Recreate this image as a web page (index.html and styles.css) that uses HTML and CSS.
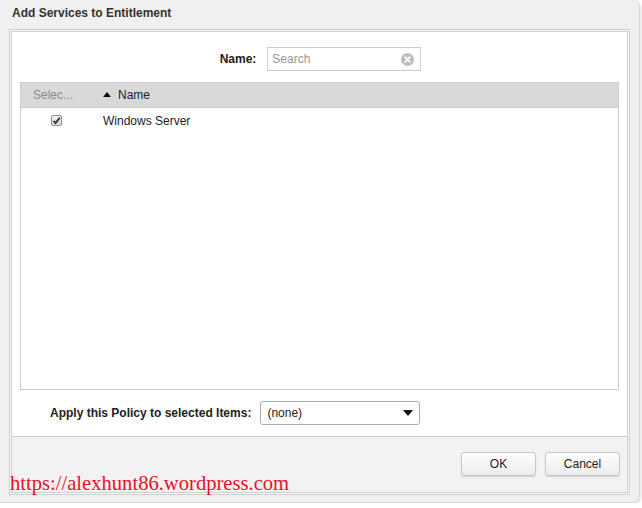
FILE: index.html
```html
<!DOCTYPE html>
<html lang="en">
<head>
    <meta charset="UTF-8">
    <title>Add Services to Entitlement</title>
    <link rel="stylesheet" href="styles.css">
</head>
<body>
    <div class="dlg">
        <div class="dlg__title">Add Services to Entitlement</div>
        <div class="dlg__frame">
            <div class="dlg__inner">
                <div class="dlg__content">
                    <div class="search-row">
                        <label class="lbl">Name:</label>
                        <div class="search">
                            <span class="search__ph">Search</span>
                            <svg class="search__clear" width="13" height="13" viewBox="0 0 13 13">
                                <circle cx="6.5" cy="6.5" r="6.5" fill="#bdbdbd"/>
                                <path d="M4.2 4.2 L8.8 8.8 M8.8 4.2 L4.2 8.8" stroke="#fff" stroke-width="1.8" stroke-linecap="round"/>
                            </svg>
                        </div>
                    </div>
                    <div class="grid">
                        <div class="grid__head">
                            <div class="grid__sel">Selec...</div>
                            <div class="grid__name">
                                <span class="sort-up"></span>Name
                            </div>
                        </div>
                        <div class="grid__row">
                            <div class="grid__sel">
                                <span class="chk">
                                    <svg width="9" height="9" viewBox="0 0 9 9">
                                        <path d="M1.5 4.8 L3.6 7 L7.8 1.6" stroke="#333" stroke-width="1.8" fill="none"/>
                                    </svg>
                                </span>
                            </div>
                            <div class="grid__name">Windows Server</div>
                        </div>
                    </div>
                    <div class="policy-row">
                        <label class="lbl">Apply this Policy to selected Items:</label>
                        <div class="select">
                            <span>(none)</span>
                            <span class="select__arrow"></span>
                        </div>
                    </div>
                </div>
                <div class="dlg__footer">
                    <button class="btn">OK</button>
                    <button class="btn">Cancel</button>
                </div>
            </div>
        </div>
        <div class="watermark">https://alexhunt86.wordpress.com</div>
    </div>
</body>
</html>
```

FILE: styles.css
```css
body{
    margin: 0;
    background: #fff;
    font-family: "Liberation Sans", Arial, sans-serif;
    font-size: 12px;
    color: #222;
}
.dlg{
    position: relative;
    width: 640px;
    height: 503px;
    box-sizing: border-box;
    background: #f0f0f0;
    border-right: 1px solid #d6d6d6;
    border-bottom: 1px solid #d6d6d6;
    border-radius: 0 7px 7px 0;
    box-shadow: 1px 1px 3px rgba(0, 0, 0, 0.12);
}
.dlg__title{
    height: 29px;
    line-height: 26px;
    padding-left: 12px;
    font-weight: bold;
    color: #333;
}
.dlg__frame{
    margin: 0 9px;
    border: 1px solid #cfcfcf;
    padding: 1px;
    background: #fafafa;
}
.dlg__inner{
    border: 1px solid #cfcfcf;
    background: #fff;
}
.dlg__content{
    padding: 15px 8px 11px 8px;
    border-bottom: 1px solid #d0d0d0;
}
.lbl{
    font-weight: bold;
    color: #222;
}
.search-row{
    display: flex;
    justify-content: center;
    align-items: center;
    gap: 11px;
    padding-left: 2px;
}
.search{
    width: 142px;
    height: 22px;
    border: 1px solid #ccc;
    display: flex;
    align-items: center;
    justify-content: space-between;
    padding: 0 6px 0 4px;
    box-sizing: content-box;
}
.search__ph{
    color: #999;
}
.grid{
    margin-top: 11px;
    height: 306px;
    border: 1px solid #ccc;
}
.grid__head{
    display: flex;
    height: 24px;
    align-items: center;
    background: #d9d9d9;
    border-bottom: 1px solid #cdcdcd;
}
.grid__row{
    display: flex;
    height: 26px;
    align-items: center;
}
.grid__sel{
    width: 82px;
    padding-left: 12px;
    box-sizing: border-box;
}
.grid__head .grid__sel{
    color: #8a8a8a;
}
.grid__row .grid__sel{
    padding-left: 30px;
}
.grid__name{
    display: flex;
    align-items: center;
}
.sort-up{
    width: 0;
    height: 0;
    border-left: 4px solid transparent;
    border-right: 4px solid transparent;
    border-bottom: 5px solid #111;
    margin-right: 7px;
    margin-top: -1px;
}
.chk{
    display: flex;
    align-items: center;
    justify-content: center;
    width: 9px;
    height: 9px;
    border: 1px solid #8e8e8e;
    border-radius: 2px;
    background: linear-gradient(#f4f4f4, #d8d8d8);
    margin-top: -2px;
}
.policy-row{
    display: flex;
    align-items: center;
    gap: 9px;
    margin-top: 11px;
    padding-left: 30px;
}
.select{
    width: 146px;
    height: 22px;
    border: 1px solid #aaa;
    border-radius: 3px;
    display: flex;
    align-items: center;
    justify-content: space-between;
    padding: 0 6px 0 6px;
    box-sizing: content-box;
    background: #fff;
}
.select__arrow{
    width: 0;
    height: 0;
    border-left: 5px solid transparent;
    border-right: 5px solid transparent;
    border-top: 6px solid #111;
}
.dlg__footer{
    height: 55px;
    background: #f2f2f2;
    display: flex;
    justify-content: flex-end;
    align-items: flex-start;
    gap: 9px;
    padding: 15px 7px 0 0;
    box-sizing: border-box;
}
.btn{
    width: 75px;
    height: 24px;
    font-family: "Liberation Sans", Arial, sans-serif;
    font-size: 12px;
    color: #222;
    border: 1px solid #c6c6c6;
    border-radius: 3px;
    background: linear-gradient(#fefefe, #ececec);
    box-shadow: 0 1px 1px rgba(0, 0, 0, 0.12);
}
.watermark{
    position: absolute;
    left: 10px;
    top: 472px;
    font-family: "Liberation Serif", "DejaVu Serif", serif;
    font-size: 20.6px;
    color: #e8102a;
}
```
